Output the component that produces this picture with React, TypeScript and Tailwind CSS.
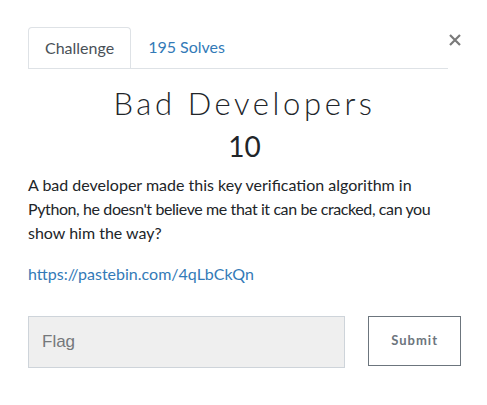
import React from 'react';

export default function App() {
  return (
    <div className="w-[487px] h-[405px] bg-white font-['Lato','Noto_Sans',sans-serif] text-[#212529]">
      <div className="pl-7 pr-[26px] pt-[27px]">
        {/* Tabs + close */}
        <div className="flex items-start">
          <div className="flex flex-1 border-b border-[#dee2e6]">
            <div className="h-[41px] -mb-px px-4 pt-[8px] border border-b-0 border-[#dee2e6] rounded-t bg-white text-[16px] text-[#495057] leading-6">
              Challenge
            </div>
            <div className="h-[41px] pl-[17px] pt-[8px] text-[16px] text-[#337ab7] leading-6">195 Solves</div>
          </div>
          <button className="w-[13px] h-[13px] mt-[6px] text-[#7a7a7a] flex items-center justify-center">
            <svg width="12" height="12" viewBox="0 0 12 12" fill="none" stroke="currentColor" strokeWidth="2.2">
              <path d="M1 1 L11 11 M11 1 L1 11" />
            </svg>
          </button>
        </div>

        {/* Title */}
        <h3 className="mt-[16px] text-center text-[31px] leading-[36px] font-light tracking-[3.6px] text-[#212529]">
          Bad Developers
        </h3>
        <div className="mt-[8px] text-center text-[28px] leading-[34px] text-[#212529]">10</div>

        {/* Description */}
        <div className="mt-[10px] text-[16px] leading-6 text-[#212529] whitespace-nowrap">
          <div>A bad developer made this key verification algorithm in</div>
          <div className="tracking-[-0.4px]">Python, he doesn't believe me that it can be cracked, can you</div>
          <div>show him the way?</div>
        </div>
        <div className="mt-[17px] text-[16px] leading-6">
          <a className="text-[#337ab7]">https://pastebin.com/4qLbCkQn</a>
        </div>

        {/* Flag form */}
        <div className="mt-[30px] flex items-start">
          <div className="w-[318px] h-[52px] bg-[#efefef] border border-[#ced4da] flex items-center pl-[13px]">
            <span className="font-['Liberation_Sans',sans-serif] text-[17px] text-[#75787b]">Flag</span>
          </div>
          <button className="ml-[23px] w-[93px] h-[50px] border-[1.5px] border-[#6c757d] bg-white text-[13px] font-bold tracking-[1px] text-[#6c757d]">
            Submit
          </button>
        </div>
      </div>
    </div>
  );
}
